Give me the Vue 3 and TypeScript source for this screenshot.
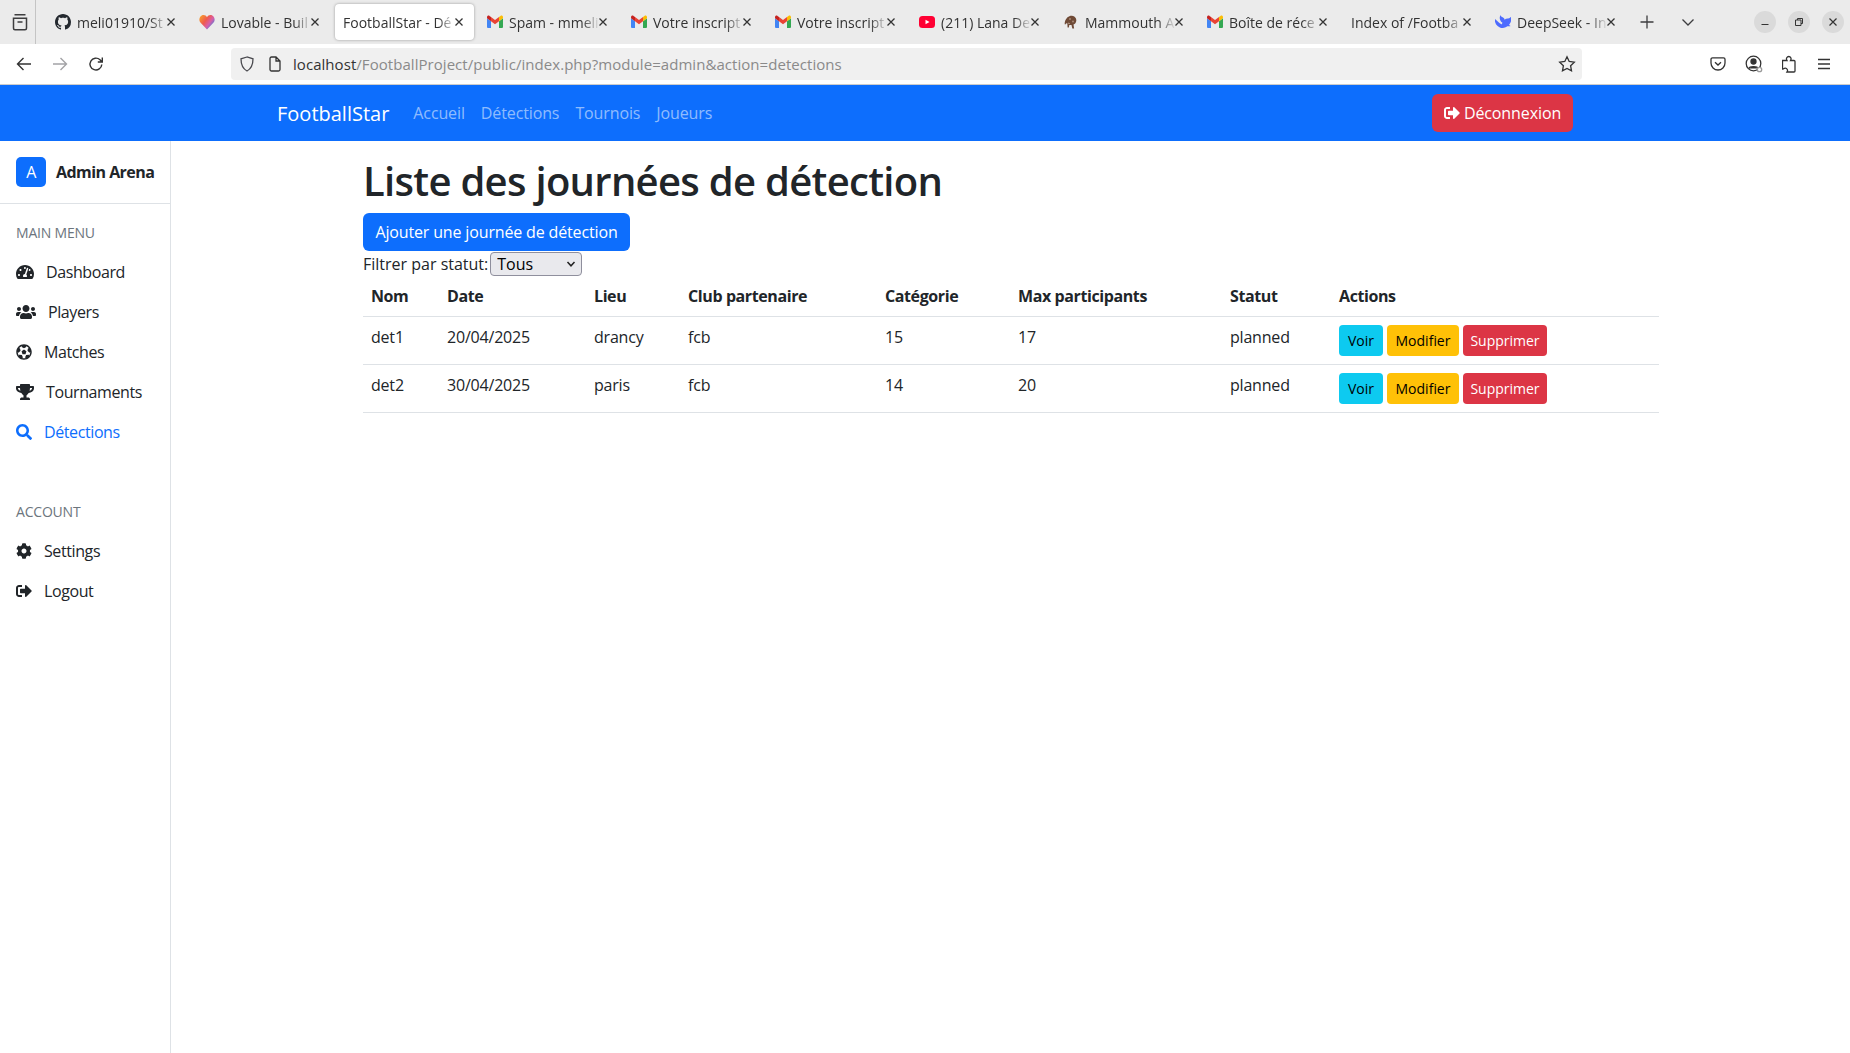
<script setup lang="ts">
interface BrowserTab {
  title: string;
  icon: string;
  active?: boolean;
}

interface MenuItem {
  label: string;
  box: string;
  path: string;
  active?: boolean;
}

const tabs: BrowserTab[] = [
  { title: 'meli01910/St', icon: 'github' },
  { title: 'Lovable - Buil', icon: 'heart' },
  { title: 'FootballStar - Dé', icon: '', active: true },
  { title: 'Spam - mmeli', icon: 'gmail' },
  { title: 'Votre inscript', icon: 'gmail' },
  { title: 'Votre inscript', icon: 'gmail' },
  { title: '(211) Lana De', icon: 'youtube' },
  { title: 'Mammouth A', icon: 'mammoth' },
  { title: 'Boîte de réce', icon: 'gmail' },
  { title: 'Index of /Footba', icon: '' },
  { title: 'DeepSeek - In', icon: 'deepseek' },
];

const navLinks = ['Accueil', 'Détections', 'Tournois', 'Joueurs'];

const logoutPath =
  'M497 273L329 441c-15 15-41 4.5-41-17v-96H152c-13.3 0-24-10.7-24-24v-96c0-13.3 10.7-24 24-24h136V88c0-21.4 25.9-32 41-17l168 168c9.3 9.4 9.3 24.6 0 34zM192 436v-40c0-6.6-5.4-12-12-12H96c-17.7 0-32-14.3-32-32V160c0-17.7 14.3-32 32-32h84c6.6 0 12-5.4 12-12V76c0-6.6-5.4-12-12-12H96c-53 0-96 43-96 96v192c0 53 43 96 96 96h84c6.6 0 12-5.4 12-12z';

const mainMenu: MenuItem[] = [
  {
    label: 'Dashboard',
    box: '0 0 576 512',
    path: 'M288 32C128.94 32 0 160.94 0 320c0 52.8 14.25 102.26 39.06 144.8 5.61 9.62 16.3 15.2 27.44 15.2h443c11.14 0 21.83-5.58 27.44-15.2C561.75 422.26 576 372.8 576 320c0-159.06-128.94-288-288-288zm0 64c14.71 0 26.58 10.13 30.32 23.65-1.11 2.26-2.64 4.23-3.45 6.67l-9.22 27.67c-5.13 3.49-10.97 6.01-17.64 6.01-17.67 0-32-14.33-32-32S270.33 96 288 96zM96 384c-17.67 0-32-14.33-32-32s14.33-32 32-32 32 14.33 32 32-14.33 32-32 32zm48-160c-17.67 0-32-14.33-32-32s14.33-32 32-32 32 14.33 32 32-14.33 32-32 32zm246.77-72.41l-61.33 184C343.13 347.33 352 364.54 352 384c0 11.72-3.38 22.55-8.88 32H232.88c-5.5-9.45-8.88-20.28-8.88-32 0-33.94 26.5-61.43 59.9-63.59l61.34-184.01c4.17-12.56 17.73-19.45 30.36-15.17 12.57 4.19 19.35 17.79 15.17 30.36zm14.66 57.2l15.52-46.55c3.47-1.29 7.13-2.23 11.05-2.23 17.67 0 32 14.33 32 32s-14.33 32-32 32c-11.38-.01-20.89-6.28-26.57-15.22zM480 384c-17.67 0-32-14.33-32-32s14.33-32 32-32 32 14.33 32 32-14.33 32-32 32z',
  },
  {
    label: 'Players',
    box: '0 0 640 512',
    path: 'M96 224c35.3 0 64-28.7 64-64s-28.7-64-64-64-64 28.7-64 64 28.7 64 64 64zm448 0c35.3 0 64-28.7 64-64s-28.7-64-64-64-64 28.7-64 64 28.7 64 64 64zm32 32h-64c-17.6 0-33.5 7.1-45.1 18.6 40.3 22.1 68.9 62 75.1 109.4h66c17.7 0 32-14.3 32-32v-32c0-35.3-28.7-64-64-64zm-256 0c61.9 0 112-50.1 112-112S381.9 32 320 32 208 82.1 208 144s50.1 112 112 112zm76.8 32h-8.3c-20.8 10-43.9 16-68.5 16s-47.6-6-68.5-16h-8.3C179.6 288 128 339.6 128 403.2V432c0 26.5 21.5 48 48 48h288c26.5 0 48-21.5 48-48v-28.8c0-63.6-51.6-115.2-115.2-115.2zm-223.7-13.4C161.5 263.1 145.6 256 128 256H64c-35.3 0-64 28.7-64 64v32c0 17.7 14.3 32 32 32h65.9c6.3-47.4 34.9-87.3 75.2-109.4z',
  },
  {
    label: 'Matches',
    box: '0 0 512 512',
    path: 'M504 256c0 136.967-111.033 248-248 248S8 392.967 8 256 119.033 8 256 8s248 111.033 248 248zm-48 0l-.003-.282-26.064 22.741-62.679-58.5 16.454-84.355 34.303 3.072c-24.889-34.216-60.004-60.089-100.709-73.141l13.651 31.939L256 139l-74.953-41.525 13.651-31.939c-40.631 13.028-75.78 38.87-100.709 73.141l34.565-3.073 16.192 84.355-62.678 58.5-26.064-22.741-.003.282c0 43.015 13.497 83.952 38.472 117.991l7.704-33.897 85.138 10.447 36.301 77.826-29.902 17.786c40.202 13.122 84.29 13.148 124.572 0l-29.902-17.786 36.301-77.826 85.138-10.447 7.704 33.897C442.503 339.952 456 299.015 456 256zm-248.102 69.571l-29.894-91.312L256 177.732l77.996 56.527-29.622 91.312h-96.476z',
  },
  {
    label: 'Tournaments',
    box: '0 0 576 512',
    path: 'M552 64H448V24c0-13.3-10.7-24-24-24H152c-13.3 0-24 10.7-24 24v40H24C10.7 64 0 74.7 0 88v56c0 35.7 22.5 72.4 61.9 100.7 31.5 22.7 69.8 37.1 110 41.7C203.3 338.5 240 360 240 360v72h-48c-35.3 0-64 20.7-64 56v12c0 6.6 5.4 12 12 12h296c6.6 0 12-5.4 12-12v-12c0-35.3-28.7-56-64-56h-48v-72s36.7-21.5 68.1-73.6c40.3-4.6 78.7-19 110-41.7 39.3-28.3 61.9-65 61.9-100.7V88c0-13.3-10.7-24-24-24zM99.3 192.8C74.9 175.2 64 155.6 64 144v-16h64.2c1 32.6 5.8 61.2 12.8 86.2-15.1-5.2-29.2-12.4-41.7-21.4zM512 144c0 16.1-17.7 36.1-35.3 48.8-12.5 9-26.7 16.2-41.8 21.4 7-25 11.8-53.6 12.8-86.2H512v16z',
  },
  {
    label: 'Détections',
    box: '0 0 512 512',
    active: true,
    path: 'M505 442.7L405.3 343c-4.5-4.5-10.6-7-17-7H372c27.6-35.3 44-79.7 44-128C416 93.1 322.9 0 208 0S0 93.1 0 208s93.1 208 208 208c48.3 0 92.7-16.4 128-44v16.3c0 6.4 2.5 12.5 7 17l99.7 99.7c9.4 9.4 24.6 9.4 33.9 0l28.3-28.3c9.4-9.4 9.4-24.6.1-34zM208 336c-70.7 0-128-57.2-128-128 0-70.7 57.2-128 128-128 70.7 0 128 57.2 128 128 0 70.7-57.2 128-128 128z',
  },
];

const accountMenu: MenuItem[] = [
  {
    label: 'Settings',
    box: '0 0 512 512',
    path: 'M487.4 315.7l-42.6-24.6c4.3-23.2 4.3-47 0-70.2l42.6-24.6c4.9-2.8 7.1-8.6 5.5-14-11.1-35.6-30-67.8-54.7-94.6-3.8-4.1-10-5.1-14.8-2.3L380.8 110c-17.9-15.4-38.5-27.3-60.8-35.1V25.8c0-5.6-3.9-10.5-9.4-11.7-36.7-8.2-74.3-7.8-109.2 0-5.5 1.2-9.4 6.1-9.4 11.7V75c-22.2 7.9-42.8 19.8-60.8 35.1L88.7 85.5c-4.9-2.8-11-1.9-14.8 2.3-24.7 26.7-43.6 58.9-54.7 94.6-1.7 5.4.6 11.2 5.5 14L67.3 221c-4.3 23.2-4.3 47 0 70.2l-42.6 24.6c-4.9 2.8-7.1 8.6-5.5 14 11.1 35.6 30 67.8 54.7 94.6 3.8 4.1 10 5.1 14.8 2.3l42.6-24.6c17.9 15.4 38.5 27.3 60.8 35.1v49.2c0 5.6 3.9 10.5 9.4 11.7 36.7 8.2 74.3 7.8 109.2 0 5.5-1.2 9.4-6.1 9.4-11.7v-49.2c22.2-7.9 42.8-19.8 60.8-35.1l42.6 24.6c4.9 2.8 11 1.9 14.8-2.3 24.7-26.7 43.6-58.9 54.7-94.6 1.5-5.5-.7-11.3-5.6-14.1zM256 336c-44.1 0-80-35.9-80-80s35.9-80 80-80 80 35.9 80 80-35.9 80-80 80z',
  },
  { label: 'Logout', box: '0 0 512 512', path: logoutPath },
];

const columns = ['Nom', 'Date', 'Lieu', 'Club partenaire', 'Catégorie', 'Max participants', 'Statut', 'Actions'];

const rows = [
  { nom: 'det1', date: '20/04/2025', lieu: 'drancy', club: 'fcb', categorie: '15', max: '17', statut: 'planned' },
  { nom: 'det2', date: '30/04/2025', lieu: 'paris', club: 'fcb', categorie: '14', max: '20', statut: 'planned' },
];
</script>

<template>
  <div class="window">
    <div class="tabbar">
      <div class="tab-manager">
        <svg width="20" height="20" viewBox="0 0 20 20" fill="none" stroke="#3d3d3f" stroke-width="1.5">
          <path d="M4.5 2.8h11M3.500 6.200h13v10a1.500 1.500 0 0 1-1.500 1.500H5a1.500 1.500 0 0 1-1.500-1.500zM7.500 10h5" />
        </svg>
      </div>
      <div class="tabs">
        <div v-for="(tab, i) in tabs" :key="i" class="tab" :class="{ active: tab.active }">
          <svg v-if="tab.icon === 'github'" class="favicon" viewBox="0 0 16 16" fill="#24292f">
            <path d="M8 0C3.58 0 0 3.58 0 8c0 3.54 2.29 6.53 5.47 7.59.4.07.55-.17.55-.38 0-.19-.01-.82-.01-1.49-2.01.37-2.53-.49-2.69-.94-.09-.23-.48-.94-.82-1.13-.28-.15-.68-.52-.01-.53.63-.01 1.08.58 1.23.82.72 1.21 1.87.87 2.33.66.07-.52.28-.87.51-1.07-1.78-.2-3.64-.89-3.64-3.95 0-.87.31-1.59.82-2.15-.08-.2-.36-1.02.08-2.12 0 0 .67-.21 2.2.82.64-.18 1.32-.27 2-.27.68 0 1.36.09 2 .27 1.53-1.04 2.2-.82 2.2-.82.44 1.1.16 1.92.08 2.12.51.56.82 1.27.82 2.15 0 3.07-1.87 3.75-3.65 3.95.29.25.54.73.54 1.48 0 1.07-.01 1.93-.01 2.2 0 .21.15.46.55.38A8.013 8.013 0 0016 8c0-4.42-3.58-8-8-8z" />
          </svg>
          <svg v-else-if="tab.icon === 'heart'" class="favicon" viewBox="0 0 16 16">
            <defs>
              <linearGradient id="lovable" x1="0" y1="0" x2="1" y2="0.7">
                <stop offset="0" stop-color="#f9a825" />
                <stop offset="0.45" stop-color="#ee5a4f" />
                <stop offset="0.7" stop-color="#d85fa8" />
                <stop offset="1" stop-color="#3f7fe0" />
              </linearGradient>
            </defs>
            <path fill="url(#lovable)" d="M8 15.500 1.400 8.600C-.4 6.600.2 2.900 2.700 1.600 4.800.5 7 1.400 8 3.300 9 1.400 11.200.5 13.300 1.600c2.500 1.300 3.100 5 1.300 7z" />
          </svg>
          <svg v-else-if="tab.icon === 'gmail'" class="favicon" viewBox="0 0 16 16">
            <path fill="#4285f4" d="M1 14h3V7.200L0 4.200V13a1 1 0 0 0 1 1z" />
            <path fill="#34a853" d="M12 14h3a1 1 0 0 0 1-1V4.200l-4 3z" />
            <path fill="#fbbc04" d="M12 3v4.200l4-3V3.200c0-1.300-1.500-2-2.500-1.300z" />
            <path fill="#ea4335" d="M4 7.200V3l4 3 4-3v4.200L8 10.200z" />
            <path fill="#c5221f" d="M0 3.200v1l4 3V3L2.500 1.900C1.500 1.200 0 1.900 0 3.200z" />
          </svg>
          <svg v-else-if="tab.icon === 'youtube'" class="favicon" viewBox="0 0 16 16">
            <rect x="0" y="2" width="16" height="12" rx="3.500" fill="#ff0033" />
            <path fill="#fff" d="m6.500 5.800 4 2.200-4 2.200z" />
          </svg>
          <svg v-else-if="tab.icon === 'mammoth'" class="favicon" viewBox="0 0 16 16">
            <path fill="#6f4a36" d="M2 7.500C3 4 6 1.500 9 1.800c2.600.3 4.600 2.400 4.300 5-.2 1.900-1.300 3.300-2.800 3.800l.6 3.900H9.300l-.8-3.400-2.200-.2-.5 2.600H4.600l-.3-4.200C3.200 9.300 2.500 10 2 10.800c-.5-1-.3-2.300 0-3.300z" />
            <circle cx="7" cy="5" r="1" fill="#a98a76" />
            <circle cx="10" cy="7.500" r="1" fill="#a98a76" />
            <path fill="#e8d7c5" d="M5.500 8.500 7 9.500l-1.500.5z" />
          </svg>
          <svg v-else-if="tab.icon === 'deepseek'" class="favicon" viewBox="0 0 16 16">
            <path fill="#4d6bfe" d="M15.600 3.200c-.2-.1-.3 0-.4.2-.6.7-1.300 1-2.200 1-1.300-.1-2.400.3-3.400 1.300-.2-1.200-.9-1.900-1.900-2.400-.5-.2-1.100-.4-1.400-.9-.3-.3-.3-.7-.5-1-.1-.2-.3-.2-.4 0-.5.8-.7 1.700-.7 2.500.1 1.900.9 3.500 2.500 4.500.2.1.2.2.2.4l-.4 1.200c-.1.3-.2.4-.6.2-1.200-.5-2.200-1.300-3.100-2.200-.9-.9-1.700-1.800-2.700-2.600l-.7-.5c-1-1-.1 1.600 0 2.300.4 1.900 1.300 3.500 2.700 4.800 1.500 1.400 3.300 2.100 5.300 2 1.300-.1 2.800-.3 4.400-1.700.4-.2.7-.1 1.400 0 .5 0 .9 0 1.200-.1.5-.1.5-.4.3-.5-1.400-.7-1.100-.4-1.400-.6.8-1 2-2 2.500-5.200 0-.3 0-.4 0-.6 0-.2 0-.3.2-.3.600-.1 1.100-.2 1.600-.5 1-.6 1.500-1.400 1.500-2.600 0-.1 0-.2-.1-.2z" />
          </svg>
          <span class="tab-title">{{ tab.title }}</span>
          <svg class="tab-close" width="10" height="10" viewBox="0 0 10 10" stroke="#333" stroke-width="1.300">
            <path d="M1.500 1.500l7 7M8.500 1.500l-7 7" />
          </svg>
        </div>
      </div>
      <svg class="new-tab" width="16" height="16" viewBox="0 0 16 16" stroke="#3d3d3f" stroke-width="1.300">
        <path d="M8 1.500v13M1.500 8h13" />
      </svg>
      <svg class="tab-list" width="16" height="16" viewBox="0 0 16 16" fill="none" stroke="#3d3d3f" stroke-width="1.300">
        <path d="M2.500 5.500 8 11l5.500-5.500" />
      </svg>
      <div class="window-controls">
        <span class="win-btn">
          <svg width="10" height="10" viewBox="0 0 10 10" stroke="#333"><path d="M1.500 7.500h7" /></svg>
        </span>
        <span class="win-btn">
          <svg width="10" height="10" viewBox="0 0 10 10" fill="none" stroke="#333"><path d="M1.500 3h5.500v5.500h-5.500zM3.500 3V1.500h5v5H7" /></svg>
        </span>
        <span class="win-btn">
          <svg width="10" height="10" viewBox="0 0 10 10" stroke="#333" stroke-width="1.200"><path d="M1.500 1.500l7 7M8.500 1.500l-7 7" /></svg>
        </span>
      </div>
    </div>

    <div class="toolbar">
      <div class="nav-buttons">
        <svg width="16" height="16" viewBox="0 0 16 16" fill="none" stroke="#333" stroke-width="1.400">
          <path d="M15 8H1.500M7.500 2 1.500 8l6 6" />
        </svg>
        <svg width="16" height="16" viewBox="0 0 16 16" fill="none" stroke="#a3a3a6" stroke-width="1.400">
          <path d="M1 8h13.500M8.500 2l6 6-6 6" />
        </svg>
        <svg width="16" height="16" viewBox="0 0 16 16" fill="none" stroke="#333" stroke-width="1.400">
          <path d="M13.800 8.500A5.900 5.900 0 1 1 12 3.800L14 6M14.300 1.500V6H9.800" />
        </svg>
      </div>
      <div class="urlbar">
        <svg class="shield" width="16" height="16" viewBox="0 0 16 16" fill="none" stroke="#4a4a4f" stroke-width="1.300">
          <path d="M8 1 2 2.800c0 5 .8 9.500 6 12.200 5.200-2.700 6-7.200 6-12.200z" />
        </svg>
        <svg class="page" width="16" height="16" viewBox="0 0 16 16" fill="none" stroke="#333" stroke-width="1.300">
          <path d="M3 2.500A1.500 1.500 0 0 1 4.500 1H9l4 4v8.500a1.500 1.500 0 0 1-1.500 1.500h-7A1.500 1.500 0 0 1 3 13.500zM9 1v4h4" />
        </svg>
        <span class="url"><span class="host">localhost</span>/FootballProject/public/index.php?module=admin&amp;action=detections</span>
        <svg class="star" width="18" height="18" viewBox="0 0 18 18" fill="none" stroke="#333" stroke-width="1.300">
          <path d="m9 1.800 2.200 4.700 5.100.7-3.700 3.500.9 5.100L9 13.400l-4.500 2.400.9-5.100-3.700-3.500 5.100-.7z" />
        </svg>
      </div>
      <div class="tool-icons">
        <svg width="16" height="16" viewBox="0 0 16 16" fill="none" stroke="#333" stroke-width="1.300">
          <path d="M2.500 1.800h11A1.500 1.500 0 0 1 15 3.300V7a7 7 0 0 1-14 0V3.300a1.500 1.500 0 0 1 1.500-1.500zM5 6.200 8 9l3-2.800" />
        </svg>
        <svg width="18" height="18" viewBox="0 0 18 18" fill="none" stroke="#333" stroke-width="1.300">
          <circle cx="8.500" cy="8.500" r="7.300" />
          <circle cx="8.500" cy="6.500" r="2.500" fill="#333" />
          <path d="M4 13.500c.5-2.500 8.500-2.500 9 0" fill="#333" />
          <circle cx="14.500" cy="14.500" r="2.200" fill="#fff" stroke="#999" />
        </svg>
        <svg width="16" height="18" viewBox="0 0 16 18" fill="none" stroke="#333" stroke-width="1.300">
          <path d="M1.500 5.500h3.500c-1.300-2 0-4 1.800-4s3 2 1.700 4h3.500c.5 0 1 .5 1 1v9.500c0 .5-.5 1-1 1h-7c1.300-1.800 0-3.800-1.700-3.800s-1.800 1-2.800 1V5.500z" />
        </svg>
        <svg width="14" height="14" viewBox="0 0 14 14" stroke="#333" stroke-width="1.300">
          <path d="M1 2.500h12M1 7h12M1 11.500h12" />
        </svg>
      </div>
    </div>

    <nav class="site-nav">
      <a class="brand">FootballStar</a>
      <a v-for="link in navLinks" :key="link" class="nav-link">{{ link }}</a>
      <button class="btn btn-danger logout-btn">
        <svg width="16" height="16" viewBox="0 0 512 512" fill="currentColor"><path :d="logoutPath" /></svg>
        Déconnexion
      </button>
    </nav>

    <div class="page-body">
      <aside class="sidebar">
        <div class="sidebar-head">
          <span class="avatar">A</span>
          <strong>Admin Arena</strong>
        </div>
        <div class="menu-title">MAIN MENU</div>
        <a v-for="item in mainMenu" :key="item.label" class="menu-item" :class="{ active: item.active }">
          <svg :viewBox="item.box" fill="currentColor"><path :d="item.path" /></svg>
          {{ item.label }}
        </a>
        <div class="menu-title account">ACCOUNT</div>
        <a v-for="item in accountMenu" :key="item.label" class="menu-item">
          <svg :viewBox="item.box" fill="currentColor"><path :d="item.path" /></svg>
          {{ item.label }}
        </a>
      </aside>

      <main class="content">
        <h1>Liste des journées de détection</h1>
        <button class="btn btn-primary">Ajouter une journée de détection</button>
        <div class="filter">
          <label for="statut">Filtrer par statut:</label>
          <span class="select-wrap">
            <select id="statut">
              <option>Tous</option>
            </select>
            <svg width="10" height="10" viewBox="0 0 10 10" fill="none" stroke="#222" stroke-width="1.500">
              <path d="M1.500 3 5 6.800 8.500 3" />
            </svg>
          </span>
        </div>
        <table>
          <thead>
            <tr>
              <th v-for="col in columns" :key="col">{{ col }}</th>
            </tr>
          </thead>
          <tbody>
            <tr v-for="row in rows" :key="row.nom">
              <td>{{ row.nom }}</td>
              <td>{{ row.date }}</td>
              <td>{{ row.lieu }}</td>
              <td>{{ row.club }}</td>
              <td>{{ row.categorie }}</td>
              <td>{{ row.max }}</td>
              <td>{{ row.statut }}</td>
              <td>
                <div class="actions">
                  <button class="btn btn-sm btn-info">Voir</button>
                  <button class="btn btn-sm btn-warning">Modifier</button>
                  <button class="btn btn-sm btn-danger">Supprimer</button>
                </div>
              </td>
            </tr>
          </tbody>
        </table>
      </main>
    </div>
  </div>
</template>

<style>
html,
body {
  margin: 0;
  background: #fff;
  overflow: hidden;
}
</style>

<style scoped>
.window {
  width: 1850px;
  height: 1053px;
  display: flex;
  flex-direction: column;
  font-family: "Open Sans", "Noto Sans", sans-serif;
  font-size: 16px;
  color: #212529;
  overflow: hidden;
}

/* browser chrome */
.tabbar {
  height: 44px;
  flex: none;
  display: flex;
  align-items: center;
  background: #ebebeb;
}

.tab-manager {
  width: 36px;
  height: 44px;
  flex: none;
  display: flex;
  align-items: center;
  padding-left: 10px;
  box-sizing: border-box;
  border-right: 1px solid #c4c4c4;
}

.tabs {
  display: flex;
  gap: 5px;
  margin-left: 11px;
}

.tab {
  width: 139px;
  height: 36px;
  padding: 0 10px 0 8px;
  box-sizing: border-box;
  display: flex;
  align-items: center;
  gap: 6px;
  border-radius: 4px;
  font-size: 14px;
  color: #333;
}

.tab.active {
  background: #fff;
  box-shadow: 0 0 3px rgba(0, 0, 0, 0.35);
}

.favicon {
  width: 16px;
  height: 16px;
  flex: none;
}

.tab-title {
  flex: 1;
  min-width: 0;
  white-space: nowrap;
  overflow: hidden;
  -webkit-mask-image: linear-gradient(to right, #000 calc(100% - 18px), transparent);
  mask-image: linear-gradient(to right, #000 calc(100% - 18px), transparent);
}

.tab-close {
  flex: none;
  margin-left: -8px;
}

.new-tab {
  margin-left: 13px;
}

.tab-list {
  margin-left: 25px;
}

.window-controls {
  display: flex;
  gap: 12px;
  margin-left: auto;
  margin-right: 6px;
}

.win-btn {
  width: 22px;
  height: 22px;
  border-radius: 50%;
  background: #dadada;
  display: flex;
  align-items: center;
  justify-content: center;
}

.toolbar {
  height: 41px;
  flex: none;
  display: flex;
  align-items: center;
  box-sizing: border-box;
  background: #fff;
  border-bottom: 1px solid #ccc;
}

.nav-buttons {
  display: flex;
  gap: 20px;
  margin-left: 16px;
}

.urlbar {
  width: 1351px;
  height: 32px;
  margin-left: 127px;
  padding: 0 6px 0 8px;
  box-sizing: border-box;
  display: flex;
  align-items: center;
  background: #f0f0f0;
  border-radius: 4px;
}

.page {
  margin-left: 12px;
}

.url {
  margin-left: 10px;
  font-size: 15px;
  letter-spacing: 0.05px;
  color: #8a8a8a;
}

.host {
  color: #333;
}

.star {
  margin-left: auto;
}

.tool-icons {
  display: flex;
  align-items: center;
  gap: 19px;
  margin-left: 128px;
}

/* site navbar */
.site-nav {
  height: 56px;
  flex: none;
  display: flex;
  align-items: center;
  padding: 0 277px;
  box-sizing: border-box;
  background: #0d6efd;
}

.brand {
  font-size: 20px;
  color: #fff;
  margin-right: 16px;
}

.nav-link {
  padding: 0 8px;
  color: rgba(255, 255, 255, 0.55);
  letter-spacing: -0.12px;
}

.btn {
  border: 0;
  font: inherit;
  border-radius: 6px;
  height: 38px;
  padding: 0 12px;
  cursor: pointer;
}

.btn-primary {
  background: #0d6efd;
  color: #fff;
  display: block;
  width: 267px;
  padding: 0;
  letter-spacing: -0.15px;
}

.btn-danger {
  background: #dc3545;
  color: #fff;
}

.btn-info {
  background: #0dcaf0;
  color: #000;
}

.btn-warning {
  background: #ffc107;
  color: #000;
}

.btn-sm {
  height: 31px;
  padding: 0;
  font-size: 14px;
  border-radius: 4px;
}

.btn-sm.btn-info {
  width: 44px;
}

.btn-sm.btn-warning {
  width: 72px;
}

.btn-sm.btn-danger {
  width: 84px;
}

.logout-btn {
  margin-left: auto;
  width: 141px;
  display: flex;
  align-items: center;
  justify-content: center;
  gap: 4px;
  padding: 0;
  letter-spacing: -0.1px;
}

/* sidebar + page */
.page-body {
  flex: 1;
  display: flex;
  min-height: 0;
}

.sidebar {
  width: 171px;
  flex: none;
  box-sizing: border-box;
  border-right: 1px solid #dee2e6;
  letter-spacing: -0.4px;
}

.sidebar-head {
  height: 63px;
  display: flex;
  align-items: center;
  gap: 10px;
  padding-left: 16px;
  box-sizing: border-box;
  border-bottom: 1px solid #dee2e6;
  color: #212529;
}

.sidebar-head strong {
  letter-spacing: -0.55px;
}

.avatar {
  width: 30px;
  height: 30px;
  border-radius: 5px;
  background: #0d6efd;
  color: #fff;
  display: flex;
  align-items: center;
  justify-content: center;
}

.menu-title {
  margin: 19px 0 9px 16px;
  font-size: 14px;
  line-height: 20px;
  color: #6c757d;
  letter-spacing: -0.2px;
}

.menu-title.account {
  margin-top: 50px;
}

.menu-item {
  height: 40px;
  display: flex;
  align-items: center;
  gap: 12px;
  padding-left: 16px;
  color: #212529;
}

.menu-item svg {
  height: 16px;
  width: auto;
  flex: none;
}

.menu-item.active {
  color: #0d6efd;
}

.content {
  flex: 1;
  padding: 16px 191px 0 192px;
  min-width: 0;
}

h1 {
  margin: 0 0 8px;
  font-size: 40px;
  line-height: 48px;
  font-weight: 600;
  letter-spacing: -0.7px;
}

.filter {
  display: flex;
  align-items: center;
  gap: 2px;
  margin-top: 1px;
  height: 24px;
}

.select-wrap {
  position: relative;
  display: block;
}

.select-wrap svg {
  position: absolute;
  right: 6px;
  top: 7px;
  pointer-events: none;
}

select {
  display: block;
  appearance: none;
  width: 92px;
  height: 24px;
  padding: 0 6px;
  background: #e9e9ed;
  border: 1px solid #8f8f9d;
  border-radius: 4px;
  font: inherit;
  color: #000;
}

table {
  width: 1296px;
  border-collapse: collapse;
  table-layout: fixed;
}

th,
td {
  padding: 8px;
  text-align: left;
  vertical-align: top;
  line-height: 24px;
  border-bottom: 1px solid #dee2e6;
  letter-spacing: -0.2px;
}

th {
  font-weight: 700;
  letter-spacing: -0.4px;
}

th:nth-child(1) { width: 60px; }
th:nth-child(2) { width: 131px; }
th:nth-child(3) { width: 78px; }
th:nth-child(4) { width: 181px; }
th:nth-child(5) { width: 117px; }
th:nth-child(6) { width: 196px; }
th:nth-child(7) { width: 93px; }

.actions {
  display: flex;
  gap: 4px;
}

.btn-sm {
  letter-spacing: 0;
}
</style>
